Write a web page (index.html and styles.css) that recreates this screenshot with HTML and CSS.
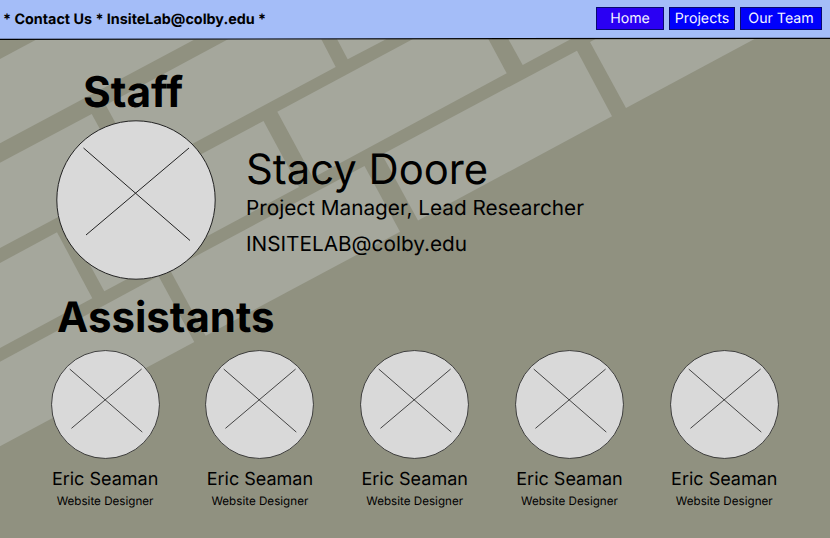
FILE: index.html
```html
<!DOCTYPE html>
<html lang="en">
<head>
<meta charset="utf-8">
<title>Our Team</title>
<link rel="stylesheet" href="styles.css">
</head>
<body>
<svg class="bricks" viewBox="0 0 830 538" aria-hidden="true">
  <path d="M0 59L36 39.7H194L0 143.3Z"/>
  <path d="M0 162.7L91.7 114L127.7 180L0 248Z"/>
  <path d="M105.7 105L228.5 39H321.2L335.7 67L141.7 171Z"/>
  <path d="M337 39H386.5L347.7 59.3Z"/>
  <path d="M0 263L57 232.3L92.3 298.3L0 348Z"/>
  <path d="M68.3 225L263.5 121L299 187L104.3 291.3Z"/>
  <path d="M277.3 111.7L413 39H488.3L506.7 73.3L313 177.7Z"/>
  <path d="M508.3 39H571L522.7 65Z"/>
  <path d="M0 361.7L158.5 276L194.3 342L0 446.3Z"/>
  <path d="M170 270L364.5 166L400 231.7L205.7 335.7Z"/>
  <path d="M382 154.5L577 50.7L612 116.3L418 220.5Z"/>
  <path d="M590 42L595.5 39H754.5L626 108Z"/>
</svg>
<svg class="defs" aria-hidden="true">
  <symbol id="portrait" viewBox="0 0 160 160">
    <circle cx="80" cy="80" r="79.2"/>
    <path d="M27.5 28L134 120.5M133 28L30 115"/>
  </symbol>
</svg>
<header class="bar">
  <div class="contact">* Contact Us * InsiteLab@colby.edu *</div>
  <nav class="nav">
    <a class="btn home">Home</a>
    <a class="btn projects">Projects</a>
    <a class="btn team">Our Team</a>
  </nav>
  <svg class="rule" viewBox="0 0 830 4" aria-hidden="true"><path d="M0 0H830V1.3L0 2.5Z" class="fill"/><path d="M0 2.3L830 1.3" class="line"/></svg>
</header>
<main>
  <h1 class="staff-title">Staff</h1>
  <section class="lead">
    <svg class="photo big"><use href="#portrait"/></svg>
    <div class="info">
      <div class="lead-name">Stacy Doore</div>
      <div class="lead-role">Project Manager, Lead Researcher</div>
      <div class="lead-mail">INSITELAB@colby.edu</div>
    </div>
  </section>
  <h2 class="assist-title">Assistants</h2>
  <section class="grid">
    <div class="person"><svg class="photo small"><use href="#portrait"/></svg><div class="name">Eric Seaman</div><div class="role">Website Designer</div></div>
    <div class="person"><svg class="photo small"><use href="#portrait"/></svg><div class="name">Eric Seaman</div><div class="role">Website Designer</div></div>
    <div class="person"><svg class="photo small"><use href="#portrait"/></svg><div class="name">Eric Seaman</div><div class="role">Website Designer</div></div>
    <div class="person"><svg class="photo small"><use href="#portrait"/></svg><div class="name">Eric Seaman</div><div class="role">Website Designer</div></div>
    <div class="person"><svg class="photo small"><use href="#portrait"/></svg><div class="name">Eric Seaman</div><div class="role">Website Designer</div></div>
  </section>
</main>
</body>
</html>
```
FILE: styles.css
```css
* { box-sizing: border-box; }
body {
  margin: 0;
  width: 830px;
  height: 538px;
  overflow: hidden;
  position: relative;
  background: #909180;
  color: #000;
  font-family: Inter, sans-serif;
  text-rendering: geometricPrecision;
}
.bricks {
  position: absolute;
  inset: 0;
  width: 830px;
  height: 538px;
  z-index: -1;
  fill: #a5a79c;
}
.defs { display: block; width: 0; height: 0; }
.bar {
  position: relative;
  height: 37px;
  background: #a4bdf8;
  display: flex;
  justify-content: space-between;
  align-items: flex-start;
  padding: 7px 8px 0 3px;
}
.rule {
  position: absolute;
  left: 0;
  top: 37px;
  width: 830px;
  height: 4px;
}
.rule .fill { fill: #a4bdf8; }
.rule .line { stroke: #000; stroke-width: 1.2; }
.contact {
  font-size: 14.35px;
  font-weight: 700;
  line-height: 25px;
  white-space: nowrap;
}
.nav { display: flex; gap: 5px; }
.btn {
  height: 23px;
  border: 1px solid #0a0a70;
  background: #0000fb;
  color: #f4f4ff;
  font-size: 14.2px;
  line-height: 22px;
  text-align: center;
  white-space: nowrap;
}
.home { width: 68px; background: #2a00f3; }
.projects { width: 66px; }
.team { width: 82px; }
h1, h2 { margin: 0; font-size: 42px; font-weight: 700; line-height: 50px; }
h1 { font-size: 42.4px; }
.staff-title { padding: 31px 0 0 83px; }
.lead { display: flex; padding: 2px 0 0 56px; height: 162px; }
.photo { display: block; fill: #d9d9d9; stroke: #222; stroke-width: 1; }
.big { width: 160px; height: 160px; flex: none; }
.info { padding: 24px 0 0 30px; white-space: nowrap; }
.lead-name { font-size: 41.8px; line-height: 52px; }
.lead-role { font-size: 20.75px; line-height: 25px; }
.lead-mail { font-size: 20.75px; line-height: 24px; margin-top: 12px; }
.assist-title { padding: 13px 0 0 57px; }
.grid { display: grid; grid-template-columns: repeat(5, 109px); column-gap: 45.8px; padding: 7px 0 0 50.6px; }
.person { text-align: center; white-space: nowrap; }
.small { width: 109px; height: 109px; margin-bottom: 1px; stroke-width: 1.2; }
.name { font-size: 18px; line-height: 22px; margin-top: 10px; }
.role { font-size: 11.65px; line-height: 15px; margin-top: 3px; }
```
